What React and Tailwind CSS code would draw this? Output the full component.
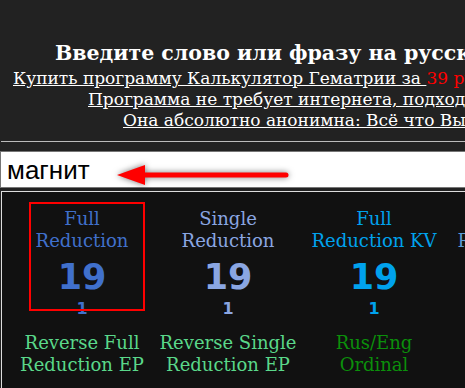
import React from 'react';

const columns = [
  { top: ['Full', 'Reduction'], value: 19, sub: 1, color: 'text-[#4070cc]', selected: true },
  { top: ['Single', 'Reduction'], value: 19, sub: 1, color: 'text-[#8aa6e2]' },
  { top: ['Full', 'Reduction KV'], value: 19, sub: 1, color: 'text-[#00a2ed]' },
  { top: ['Single', 'Reduction KV'], value: 19, sub: 1, color: 'text-[#5b9bd5]' },
];

const secondRow = [
  { top: ['Reverse Full', 'Reduction EP'], color: 'text-[#5ad88a]' },
  { top: ['Reverse Single', 'Reduction EP'], color: 'text-[#5ad88a]' },
  { top: ['Rus/Eng', 'Ordinal'], color: 'text-[#0b8f0b]' },
];

const Arrow = () => (
  <svg
    className="absolute left-[100px] top-[8px] drop-shadow-[0_0_3px_rgba(0,0,0,0.55)]"
    width="200"
    height="36"
    viewBox="0 0 200 36"
  >
    <line x1="40" y1="16" x2="186" y2="16" stroke="#ff0000" strokeWidth="5" strokeLinecap="round" />
    <polygon points="17,16 45,6 45,26" fill="#ff0000" />
  </svg>
);

export default function App() {
  return (
    <div className="h-screen w-full overflow-hidden bg-[#222222] flex flex-col font-['DejaVu_Serif',serif] whitespace-nowrap">
      {/* Шапка */}
      <div className="pt-[39px]">
        <h1 className="pl-[55px] text-[20.5px] leading-[29px] font-bold text-white">
          Введите слово или фразу на русском языке
        </h1>
        <div className="text-[17px] leading-[21px] text-white">
          <p className="pl-[13px]">
            <a className="underline">Купить программу Калькулятор Гематрии за </a>
            <span className="text-[#ff0000]">39 рублей</span>
          </p>
          <p className="pl-[88px]">
            <a className="underline">Программа не требует интернета, подходит для Windows</a>
          </p>
          <p className="pl-[123px]">
            <a className="underline">Она абсолютно анонимна: Всё что Вы вводите остаётся у Вас</a>
          </p>
        </div>
      </div>

      <div className="mt-[10px] ml-px border-t border-[#bbbbbb]" />

      {/* Поле ввода */}
      <div className="relative mt-[9px] w-[800px]">
        <input
          readOnly
          value="магнит"
          className="block h-[37px] w-full border border-[#767676] bg-white pl-[6px] pt-[2px] font-['Liberation_Sans',Arial,sans-serif] text-[26px] text-black outline-none"
        />
        <Arrow />
      </div>

      {/* Результаты */}
      <div className="mt-[3px] ml-px flex-1 border-t border-l border-[#dddddd] bg-[#111111] pt-[16px] pl-[7px]">
        <div className="flex">
          {columns.map((col, i) => (
            <div key={i} className={`relative w-[146px] shrink-0 text-center ${col.color}`}>
              {col.selected && (
                <span className="absolute left-[20px] top-[-6px] h-[109px] w-[116px] border-2 border-[#ff0000]" />
              )}
              <div className="text-[18px] leading-[22px]">
                {col.top[0]}
                <br />
                {col.top[1]}
              </div>
              <div className="mt-[5px] font-['DejaVu_Sans',Verdana,sans-serif] text-[35px] leading-[40px] font-bold">
                {col.value}
              </div>
              <div className="mt-[4px] font-['DejaVu_Sans',Verdana,sans-serif] text-[16px] leading-[16px] font-bold">
                {col.sub}
              </div>
            </div>
          ))}
        </div>
        <div className="mt-[15px] flex">
          {secondRow.map((col, i) => (
            <div key={i} className={`w-[146px] shrink-0 text-center text-[18px] leading-[22px] ${col.color}`}>
              {col.top[0]}
              <br />
              {col.top[1]}
            </div>
          ))}
        </div>
      </div>
    </div>
  );
}
